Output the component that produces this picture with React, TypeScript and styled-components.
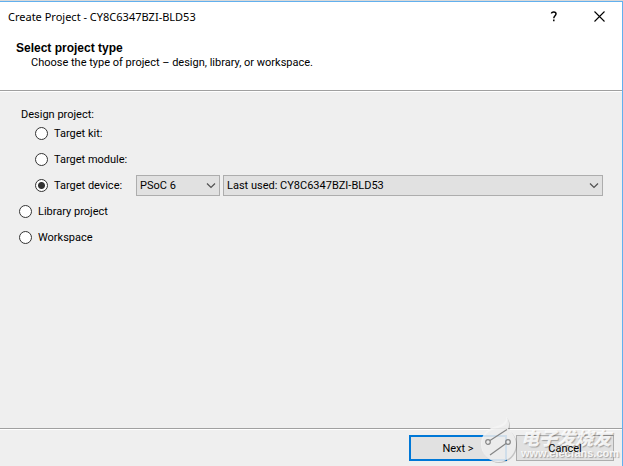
import React, { useState } from "react";
import styled, { createGlobalStyle } from "styled-components";

const GlobalStyle = createGlobalStyle`
  * { box-sizing: border-box; }
  body { margin: 0; background: #efefef; }
`;

const Dialog = styled.form`
  position: relative;
  display: flex;
  flex-direction: column;
  min-height: 100vh;
  border-top: 1px solid #d9d9d9;
  background: #efefef;
  color: #000;
  font-family: Roboto, "Liberation Sans", Arial, sans-serif;
  font-size: 11px;
  line-height: 14px;
`;

const Frame = styled.div`
  flex: 1;
  display: flex;
  flex-direction: column;
  border-top: 1px solid #62b0ee;
  border-right: 1px solid #62b0ee;
`;

const Header = styled.header`
  background: #fff;
  height: 90px;
  border-bottom: 1px solid #fff;
  box-shadow: inset 0 -1px 0 #a0a0a0;
`;

const TitleBar = styled.div`
  display: flex;
  align-items: center;
  height: 30px;
  padding: 0 15px 0 8px;
`;

const Title = styled.h1`
  flex: 1;
  margin: 0;
  font: 400 11px/16px "Noto Sans", "Segoe UI", sans-serif;
`;

const TitleButton = styled.button`
  display: flex;
  align-items: center;
  justify-content: center;
  width: 16px;
  height: 14px;
  margin: 0 0 2px 29px;
  padding: 0;
  border: 0;
  background: none;
`;

const Intro = styled.div`
  padding: 9px 16px 0;
`;

const Heading = styled.h2`
  margin: 0;
  font: 700 12px/14px "Liberation Sans", Arial, sans-serif;
`;

const Description = styled.p`
  margin: 0 0 0 15px;
  padding-top: 1px;
`;

const Content = styled.fieldset`
  flex: 1;
  margin: 0;
  min-width: 0;
  border: 0;
  padding: 18px 19px 0;
`;

const GroupLabel = styled.div`
  padding-left: 2px;
  line-height: 10px;
`;

const Row = styled.div<{ $nested?: boolean }>`
  display: flex;
  align-items: center;
  height: 26px;
  padding-left: ${(p) => (p.$nested ? 16 : 0)}px;
`;

const RadioLabel = styled.label<{ $wide?: boolean }>`
  display: flex;
  align-items: center;
  gap: 6px;
  flex: none;
  width: ${(p) => (p.$wide ? "101px" : "auto")};
`;

const RadioText = styled.span`
  padding-top: 2px;
`;

const Radio = styled.input`
  appearance: none;
  flex: none;
  width: 13px;
  height: 13px;
  margin: 0;
  border: 1px solid #333;
  border-radius: 50%;
  background: #fff;
  &:checked {
    background: radial-gradient(circle, #333 3px, #fff 4px);
  }
`;

const SelectBox = styled.div<{ $grow?: boolean }>`
  position: relative;
  flex: ${(p) => (p.$grow ? "1" : "0 0 84px")};
  margin-right: ${(p) => (p.$grow ? 0 : 3)}px;
  svg {
    position: absolute;
    right: 4px;
    top: 8px;
    pointer-events: none;
  }
`;

const Select = styled.select`
  appearance: none;
  display: block;
  width: 100%;
  height: 21px;
  padding: 2px 18px 0 3px;
  border: 1px solid #adadad;
  border-radius: 0;
  background: #e1e1e1;
  color: #000;
  font: inherit;
`;

const Footer = styled.footer`
  display: flex;
  justify-content: flex-end;
  gap: 9px;
  height: 38px;
  padding: 6px 8px 0;
  border-top: 1px solid #a0a0a0;
  box-shadow: inset 0 1px 0 #fff;
`;

const Button = styled.button<{ $primary?: boolean }>`
  width: 98px;
  height: 26px;
  padding: 2px 0 0;
  border: ${(p) => (p.$primary ? "2px solid #0078d7" : "1px solid #adadad")};
  background: #e1e1e1;
  color: #000;
  font: inherit;
`;

const ButtonText = styled.span`
  position: relative;
  z-index: 1;
`;

const Watermark = styled.div`
  position: absolute;
  right: 0;
  bottom: 2px;
  display: flex;
  align-items: flex-end;
  gap: 3px;
  pointer-events: none;
  color: rgba(255, 255, 255, 0.85);
  text-shadow: 1px 1px 1px rgba(0, 0, 0, 0.28);
`;

const WatermarkText = styled.div`
  width: 102px;
  padding-bottom: 5px;
  font: 700 11px/12px "Liberation Sans", sans-serif;
  white-space: nowrap;
`;

const WatermarkName = styled.div`
  font: italic 900 18px/20px "Noto Sans CJK SC", sans-serif;
`;

const Chevron = () => (
  <svg width="10" height="6" viewBox="0 0 10 6" fill="none" stroke="#505050" strokeWidth="1.2">
    <path d="M1 .5 5 4.500 9 .5" />
  </svg>
);

const FlameLogo = () => (
  <svg width="38" height="48" viewBox="0 0 38 48" fill="none">
    <path
      d="M26 1C27 6 24 9 17 11 7 13 1 19 1 28c0 10 8 18 17.500 18S36 38 36 28c0-6-3-11-8-14 2-4 1-10-2-13Z"
      fill="#000"
      opacity=".18"
      transform="translate(1 1)"
    />
    <path
      d="M26 0C27 5 24 8 17 10 7 12 1 19 1 28c0 10 8 18 17.500 18S36 38 36 28c0-6-3-11-8-15 2-4 1-9-2-13Z"
      fill="#f5f5f5"
      opacity=".85"
    />
    <g stroke="#858585" strokeWidth="1.2">
      <circle cx="8" cy="26" r="2.300" />
      <circle cx="28" cy="26" r="2.300" />
      <path d="M10 24.500 27 13.500M26 27.500 10 39" />
    </g>
  </svg>
);

const App = () => {
  const [kind, setKind] = useState("device");
  const option = (value: string, text: string, wide = false) => (
    <RadioLabel $wide={wide}>
      <Radio type="radio" name="kind" value={value} checked={kind === value} onChange={() => setKind(value)} />
      <RadioText>{text}</RadioText>
    </RadioLabel>
  );

  return (
    <>
      <GlobalStyle />
      <Dialog onSubmit={(e) => e.preventDefault()}>
        <Frame>
          <Header>
            <TitleBar>
              <Title>Create Project - CY8C6347BZI-BLD53</Title>
              <TitleButton type="button" aria-label="Help">
                <svg width="8" height="11" viewBox="0 0 8 11" fill="none" stroke="#000" strokeWidth="1.500">
                  <path d="M1.500 2.500C1.500 .5 6 .3 6 2.800 6 4.800 3.800 4.600 3.800 7.300M3.800 8.600v1.700" />
                </svg>
              </TitleButton>
              <TitleButton type="button" aria-label="Close">
                <svg width="12" height="11" viewBox="0 0 12 11" stroke="#000" strokeWidth="1.100">
                  <path d="m1.500.5 10 10m0-10-10 10" />
                </svg>
              </TitleButton>
            </TitleBar>
            <Intro>
              <Heading>Select project type</Heading>
              <Description>Choose the type of project – design, library, or workspace.</Description>
            </Intro>
          </Header>
          <Content aria-label="Project type">
            <GroupLabel>Design project:</GroupLabel>
            <Row $nested>{option("kit", "Target kit:")}</Row>
            <Row $nested>{option("module", "Target module:")}</Row>
            <Row $nested>
              {option("device", "Target device:", true)}
              <SelectBox>
                <Select aria-label="Device family">
                  <option>PSoC 6</option>
                </Select>
                <Chevron />
              </SelectBox>
              <SelectBox $grow>
                <Select aria-label="Device">
                  <option>Last used: CY8C6347BZI-BLD53</option>
                </Select>
                <Chevron />
              </SelectBox>
            </Row>
            <Row>{option("library", "Library project")}</Row>
            <Row>{option("workspace", "Workspace")}</Row>
          </Content>
          <Footer>
            <Button type="submit" $primary>
              <ButtonText>Next &gt;</ButtonText>
            </Button>
            <Button type="button">
              <ButtonText>Cancel</ButtonText>
            </Button>
          </Footer>
        </Frame>
        <Watermark>
          <FlameLogo />
          <WatermarkText>
            <WatermarkName>电子发烧友</WatermarkName>
            www.elecfans.com
          </WatermarkText>
        </Watermark>
      </Dialog>
    </>
  );
};

export default App;
